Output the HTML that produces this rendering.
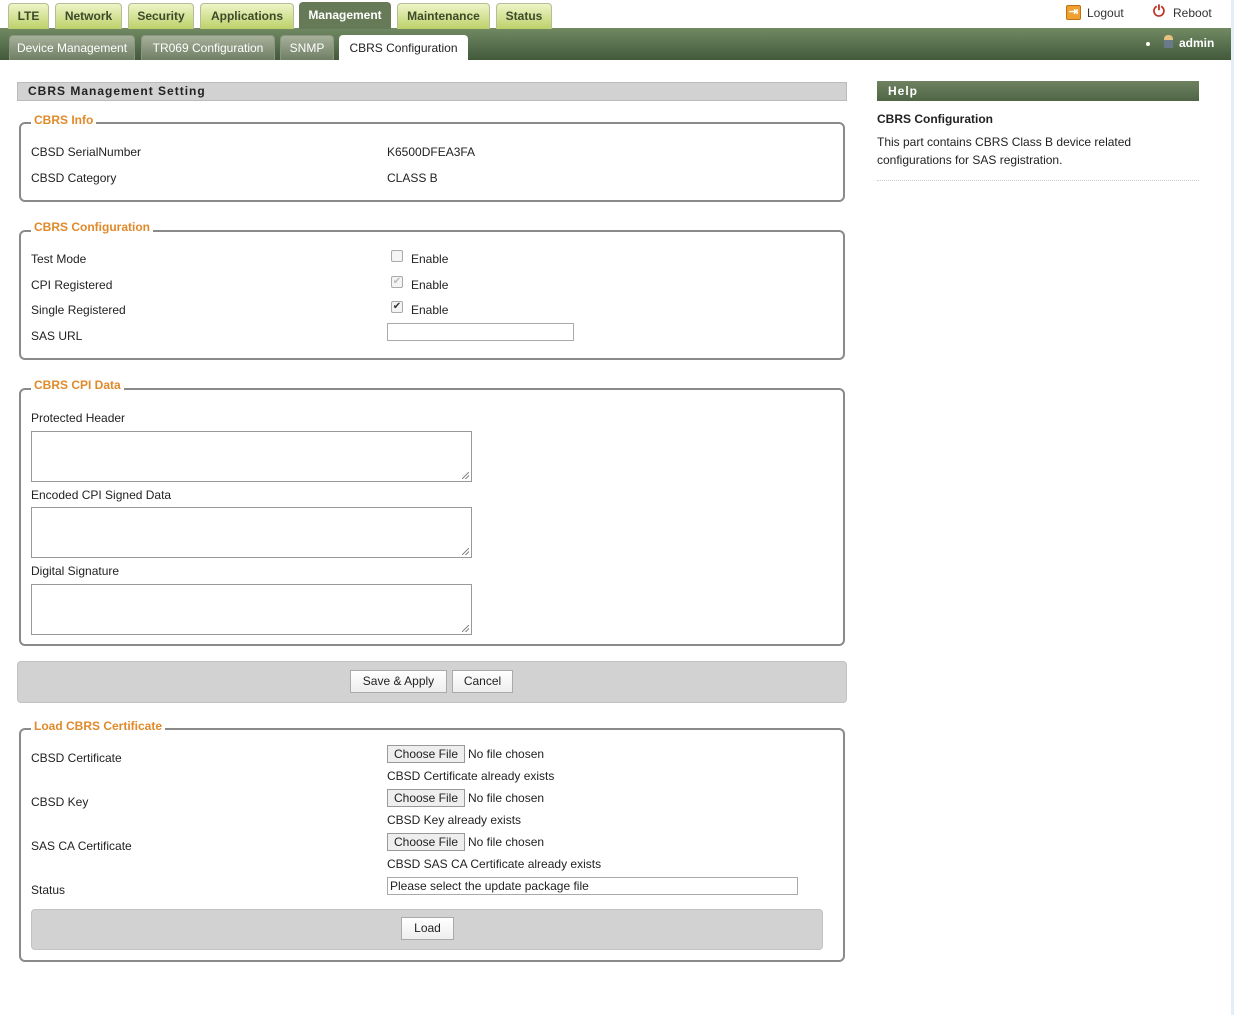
<!DOCTYPE html>
<html><head><meta charset="utf-8"><style>
*{box-sizing:border-box;margin:0;padding:0}
body{width:1234px;height:1015px;position:relative;background:#fff;font-family:"Liberation Sans",Arial,sans-serif;font-size:12px;color:#222;overflow:hidden}
.a{position:absolute}
.tab{position:absolute;top:3px;height:26px;border:1px solid #b5bd98;border-bottom:none;border-radius:4px 4px 0 0;background:linear-gradient(#eef5c8,#bcd068);color:#3d4a2c;font-size:12px;font-weight:bold;text-align:center;line-height:24px}
.tab.on{background:#667a58;color:#fff;border-color:#667a58;top:2px;height:27px}
.bar{position:absolute;left:0;top:28px;width:1231px;height:32px;background:linear-gradient(#718a63,#42593b)}
.st{position:absolute;top:35px;height:25px;border-radius:4px 4px 0 0;background:linear-gradient(#a6b09a,#6f7e64);color:#fff;font-size:12px;text-align:center;line-height:25px;border:1px solid #8a9680;border-bottom:none}
.st.on{background:#fff;color:#222;border-color:#fff}
.fs{position:absolute;left:19px;width:826px;border:2px solid #8a8a8a;border-radius:6px}
.lg{position:absolute;left:31px;background:#fff;color:#e08a2a;font-weight:bold;font-size:12px;padding:0 3px 0 3px}
.l{position:absolute;left:31px}
.r{position:absolute;left:387px}
.inp{position:absolute;border:1px solid #aaa;background:#fff}
.ta{position:absolute;left:31px;width:441px;height:51px;border:1px solid #999;background:#fff}
.ta:after{content:"";position:absolute;right:2px;bottom:2px;width:7px;height:7px;background:linear-gradient(135deg,transparent 45%,#888 45%,#888 55%,transparent 55%,transparent 70%,#888 70%,#888 80%,transparent 80%)}
.btn{position:absolute;height:23px;border:1px solid #aaa;background:linear-gradient(#fff,#eee);text-align:center;line-height:21px;font-size:12px}
.fb{position:absolute;left:387px;width:78px;height:18px;border:1px solid #999;background:#eee;text-align:center;line-height:16px}
.cb{position:absolute;left:391px;width:12px;height:12px;border:1px solid #aaa;border-radius:2px;background:#f4f4f4;font-size:10px;line-height:10px;text-align:center}
</style></head><body>
<div class="a" style="left:1231px;top:0;width:3px;height:1015px;background:#e3eef8"></div>
<div class="bar"></div>
<div class="tab" style="left:8px;width:41px">LTE</div>
<div class="tab" style="left:55px;width:67px">Network</div>
<div class="tab" style="left:128px;width:66px">Security</div>
<div class="tab" style="left:200px;width:94px">Applications</div>
<div class="tab on" style="left:299px;width:92px">Management</div>
<div class="tab" style="left:397px;width:93px">Maintenance</div>
<div class="tab" style="left:496px;width:56px">Status</div>
<div class="st" style="left:9px;width:126px">Device Management</div>
<div class="st" style="left:141px;width:134px">TR069 Configuration</div>
<div class="st" style="left:280px;width:54px">SNMP</div>
<div class="st on" style="left:339px;width:129px">CBRS Configuration</div>
<div class="a" style="left:1066px;top:5px;width:15px;height:15px;background:#f0a030;border:1px solid #c07010;border-radius:2px;color:#fff;font-size:11px;line-height:13px;text-align:center;font-weight:bold">⇥</div>
<div class="a" style="left:1087px;top:6px;font-size:12px;color:#333">Logout</div>
<div class="a" style="left:1153px;top:3px;font-size:15px;color:#c03020;font-weight:bold">⏻</div>
<div class="a" style="left:1173px;top:6px;font-size:12px;color:#333">Reboot</div>
<div class="a" style="left:1146px;top:42px;width:4px;height:4px;border-radius:2px;background:#fff"></div>
<div class="a" style="left:1164px;top:35px;width:9px;height:13px;background:linear-gradient(#e8c080 40%,#6a7a8a 40%);border-radius:4px 4px 1px 1px"></div>
<div class="a" style="left:1179px;top:36px;font-size:12px;color:#fff;font-weight:bold">admin</div>

<div class="a" style="left:17px;top:82px;width:830px;height:19px;background:#d2d2d2;border:1px solid #bbb;font-weight:bold;letter-spacing:1px;padding-left:10px;line-height:17px">CBRS Management Setting</div>

<div class="a" style="left:877px;top:81px;width:322px;height:20px;background:linear-gradient(#6e8261,#4f6545);color:#fff;font-weight:bold;letter-spacing:1px;padding-left:11px;line-height:20px">Help</div>
<div class="a" style="left:877px;top:112px;font-weight:bold">CBRS Configuration</div>
<div class="a" style="left:877px;top:133px;line-height:18px;width:300px">This part contains CBRS Class B device related configurations for SAS registration.</div>
<div class="a" style="left:877px;top:180px;width:322px;border-top:1px dotted #ccc"></div>

<div class="fs" style="top:122px;height:80px"></div>
<div class="lg" style="top:113px">CBRS Info</div>
<div class="l" style="top:145px">CBSD SerialNumber</div><div class="r" style="top:145px">K6500DFEA3FA</div>
<div class="l" style="top:171px">CBSD Category</div><div class="r" style="top:171px">CLASS B</div>

<div class="fs" style="top:230px;height:130px"></div>
<div class="lg" style="top:220px">CBRS Configuration</div>
<div class="l" style="top:252px">Test Mode</div><div class="cb" style="top:250px"></div><div class="a" style="left:411px;top:252px">Enable</div>
<div class="l" style="top:278px">CPI Registered</div><div class="cb" style="top:276px;color:#bbb">✔</div><div class="a" style="left:411px;top:278px">Enable</div>
<div class="l" style="top:303px">Single Registered</div><div class="cb" style="top:301px;color:#333">✔</div><div class="a" style="left:411px;top:303px">Enable</div>
<div class="l" style="top:329px">SAS URL</div><div class="inp" style="left:387px;top:323px;width:187px;height:18px"></div>

<div class="fs" style="top:388px;height:258px"></div>
<div class="lg" style="top:378px">CBRS CPI Data</div>
<div class="l" style="top:411px">Protected Header</div><div class="ta" style="top:431px"></div>
<div class="l" style="top:488px">Encoded CPI Signed Data</div><div class="ta" style="top:507px"></div>
<div class="l" style="top:564px">Digital Signature</div><div class="ta" style="top:584px"></div>

<div class="a" style="left:17px;top:661px;width:830px;height:42px;background:#d2d2d2;border:1px solid #c2c2c2;border-radius:4px"></div>
<div class="btn" style="left:350px;top:670px;width:97px">Save &amp; Apply</div>
<div class="btn" style="left:452px;top:670px;width:61px">Cancel</div>

<div class="fs" style="top:728px;height:234px"></div>
<div class="lg" style="top:719px">Load CBRS Certificate</div>
<div class="l" style="top:751px">CBSD Certificate</div>
<div class="fb" style="top:745px">Choose File</div><div class="a" style="left:468px;top:747px">No file chosen</div>
<div class="r" style="top:769px">CBSD Certificate already exists</div>
<div class="l" style="top:795px">CBSD Key</div>
<div class="fb" style="top:789px">Choose File</div><div class="a" style="left:468px;top:791px">No file chosen</div>
<div class="r" style="top:813px">CBSD Key already exists</div>
<div class="l" style="top:839px">SAS CA Certificate</div>
<div class="fb" style="top:833px">Choose File</div><div class="a" style="left:468px;top:835px">No file chosen</div>
<div class="r" style="top:857px">CBSD SAS CA Certificate already exists</div>
<div class="l" style="top:883px">Status</div>
<div class="inp" style="left:387px;top:877px;width:411px;height:18px;padding-left:2px;line-height:16px">Please select the update package file</div>
<div class="a" style="left:31px;top:909px;width:792px;height:41px;background:#d2d2d2;border:1px solid #c2c2c2;border-radius:4px"></div>
<div class="btn" style="left:401px;top:917px;width:53px">Load</div>
</body></html>
